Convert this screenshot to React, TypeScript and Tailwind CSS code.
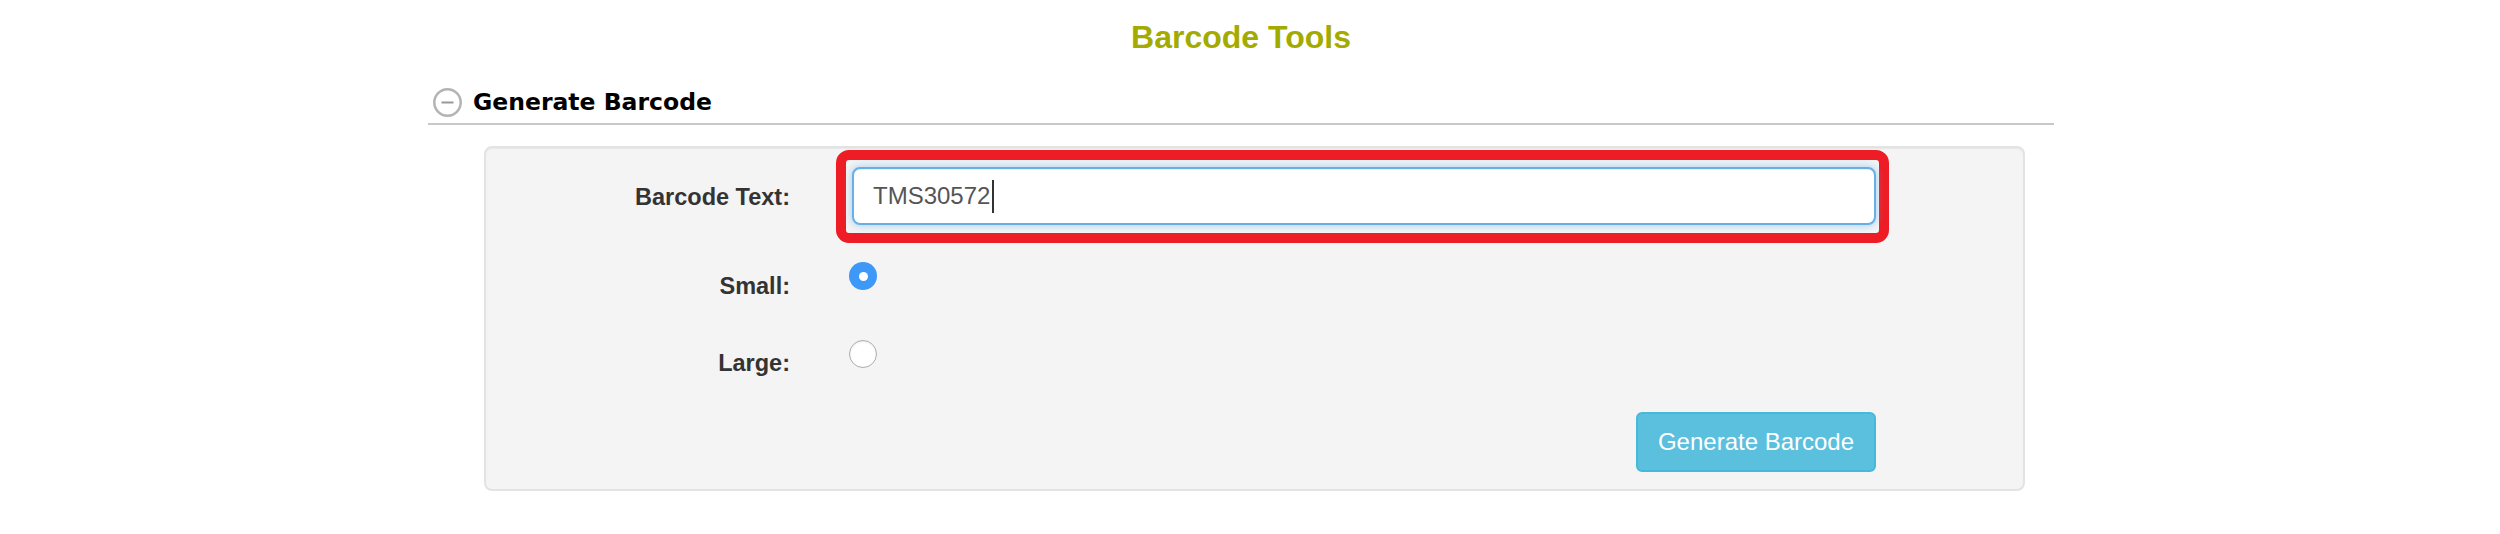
import React from 'react';

// Barcode tools page – header, collapsible section and a bootstrap-like "well" form
export default function App() {
  const labelCls =
    "w-[350px] shrink-0 pr-[46px] text-right text-[23.5px] leading-[28px] font-bold text-[#333]";

  return (
    <div className="min-h-[534px] bg-white font-['Liberation_Sans',Arial,sans-serif]">
      <div className="ml-[428px] w-[1626px]">
        <h1 className="pt-[19px] text-center text-[32px] leading-[36px] font-bold text-[#a3ab00]">
          Barcode Tools
        </h1>

        {/* Section header */}
        <div className="mt-[33px] flex items-center gap-[11px] border-b-2 border-[#c8c8c8] pb-[6px] pl-[5px]">
          <svg width="29" height="29" viewBox="0 0 29 29" className="shrink-0">
            <circle cx="14.5" cy="14.5" r="13.2" fill="none" stroke="#b3b3b3" strokeWidth="2.5" />
            <line x1="8.5" y1="14.5" x2="20.5" y2="14.5" stroke="#999" strokeWidth="2" />
          </svg>
          <h2 className="font-['DejaVu_Sans',Verdana,sans-serif] text-[23.5px] leading-[29px] font-bold text-black">
            Generate Barcode
          </h2>
        </div>

        {/* Well */}
        <section className="mt-[21px] ml-[56px] w-[1541px] rounded-[8px] border-2 border-[#e3e3e3] bg-[#f4f4f4] pt-[2px] pr-[134px] pb-[17px] shadow-[inset_0_1px_1px_rgba(0,0,0,0.05)]">
          {/* Barcode text */}
          <div className="flex items-center">
            <label className={labelCls}>Barcode Text:</label>
            <div className="flex-1 rounded-[13px] border-[10px] border-[#ee1c25] pt-[7px] pr-[3px] pb-[8px] pl-[6px]">
              <div className="flex h-[58px] items-center rounded-[8px] border-2 border-[#66afe9] bg-white pl-[19px] text-[24px] text-[#555] shadow-[inset_0_1px_1px_rgba(0,0,0,0.075),0_0_8px_rgba(102,175,233,0.6)]">
                <span>TMS30572</span>
                <span className="ml-[2px] h-[33px] w-[2px] bg-[#333]" />
              </div>
            </div>
          </div>

          {/* Small */}
          <div className="flex h-[78px] items-start">
            <label className={`${labelCls} mt-[29px]`}>Small:</label>
            <div className="mt-[19px] ml-[13px] flex h-[28px] w-[28px] items-center justify-center rounded-full bg-[#3d98f8]">
              <div className="h-[9px] w-[9px] rounded-full bg-white" />
            </div>
          </div>

          {/* Large */}
          <div className="flex h-[91px] items-start">
            <label className={`${labelCls} mt-[28px]`}>Large:</label>
            <div className="mt-[19px] ml-[13px] h-[28px] w-[28px] rounded-full border border-[#acacac] bg-white shadow-[inset_0_1px_2px_rgba(0,0,0,0.08)]" />
          </div>

          {/* Submit */}
          <div className="flex">
            <div className="w-[350px] shrink-0" />
            <div className="flex flex-1 justify-end pr-[13px]">
              <button
                type="button"
                className="h-[60px] w-[240px] rounded-[6px] border-2 border-[#46b8da] bg-[#5bc0de] text-[24px] text-white"
              >
                Generate Barcode
              </button>
            </div>
          </div>
        </section>
      </div>
    </div>
  );
}
